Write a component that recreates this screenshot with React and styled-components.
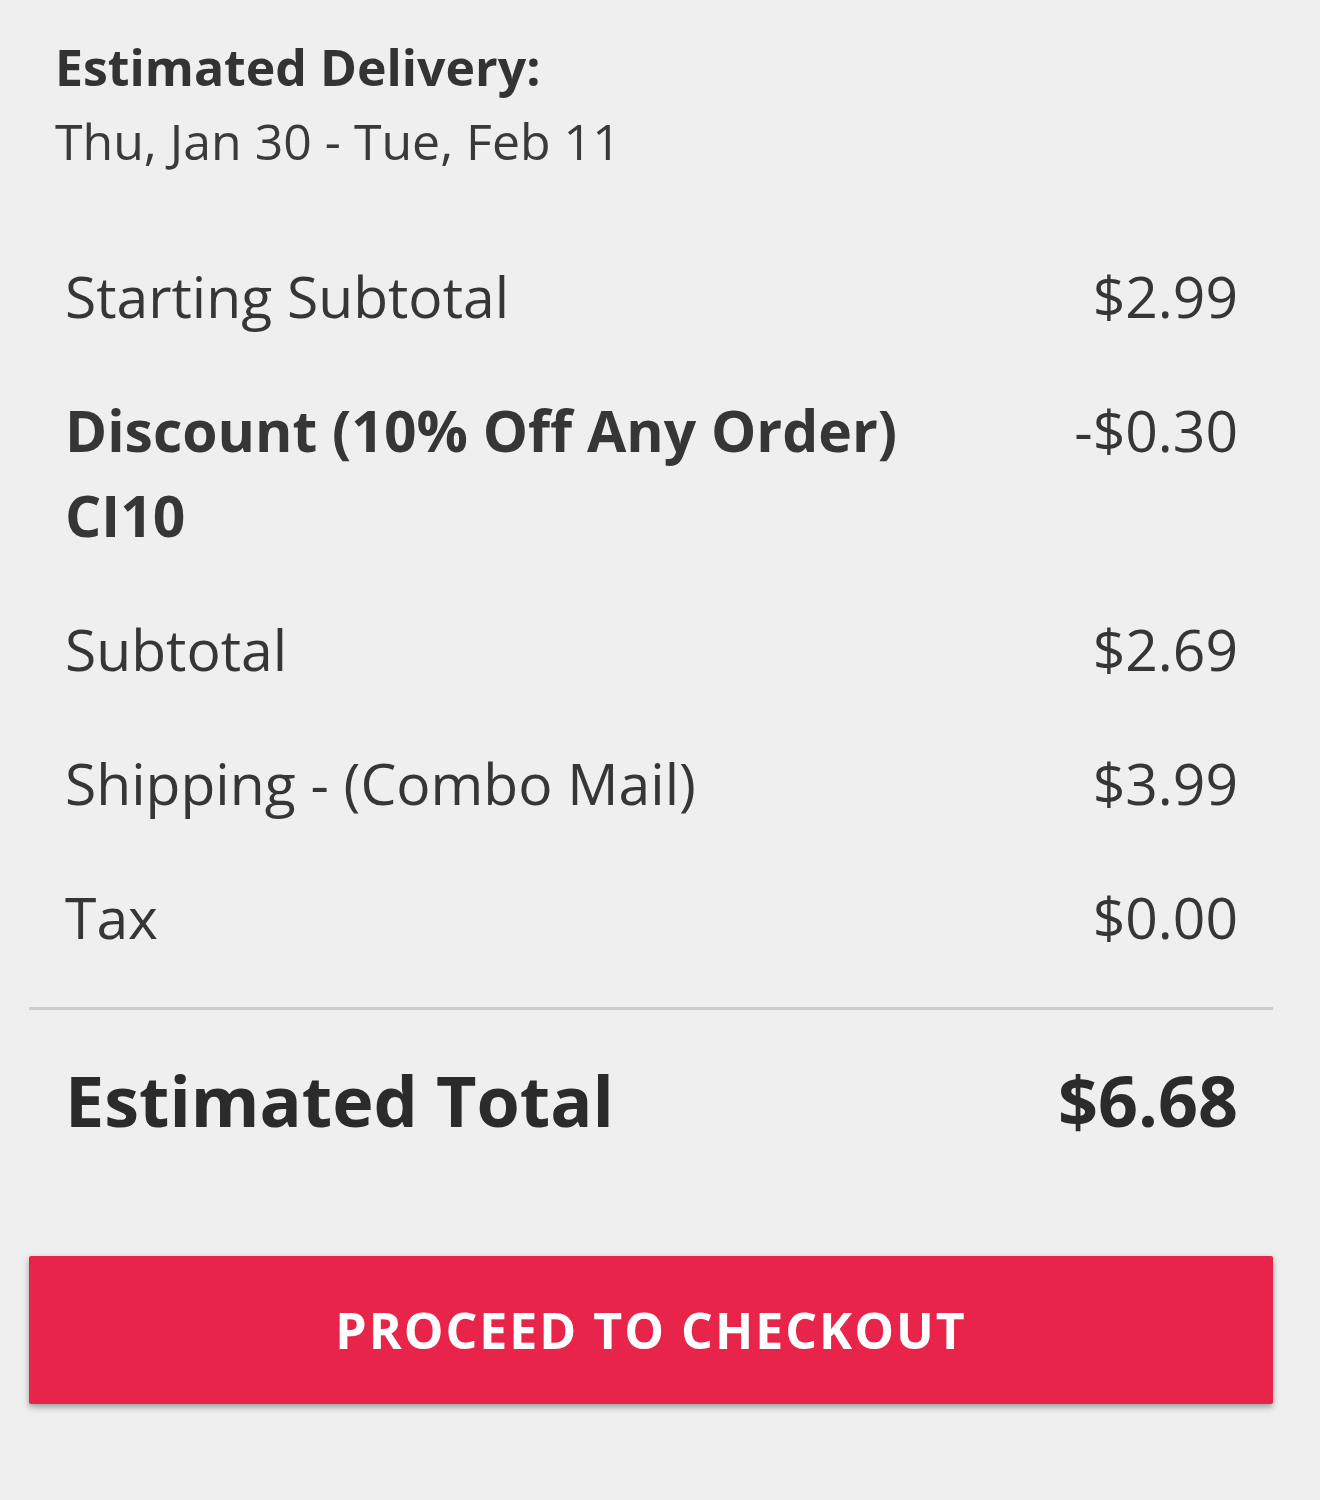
import React from 'react';
import styled, { createGlobalStyle } from 'styled-components';

const GlobalStyle = createGlobalStyle`
  html, body {
    margin: 0;
    padding: 0;
    background: #efefef;
  }
  body {
    font-family: "Open Sans", "Liberation Sans", sans-serif;
    color: #333;
  }
`;

const Page = styled.div`
  min-height: 1500px;
  padding: 0 47px 0 29px;
  box-sizing: border-box;
  background: #efefef;
`;

const Delivery = styled.div`
  padding: 30px 0 0 26px;
  font-size: 50px;
  line-height: 74px;
`;

const DeliveryTitle = styled.div`
  font-weight: 700;
  color: #333;
`;

const DeliveryDates = styled.div`
  font-weight: 400;
  color: #3a3a3a;
`;

const Lines = styled.div`
  margin-top: 51px;
  padding: 0 35px 0 36px;
`;

const Line = styled.div`
  display: flex;
  justify-content: space-between;
  align-items: flex-start;
  gap: 40px;
  padding: 24.5px 0;
  font-size: 57px;
  line-height: 85px;
  font-weight: ${p => (p.$bold ? 700 : 400)};
  color: #363636;
`;

const Label = styled.div`
  max-width: 880px;
`;

const Amount = styled.div`
  font-weight: 400;
  white-space: nowrap;
`;

const Divider = styled.hr`
  margin: 23px 0 0;
  border: 0;
  height: 3px;
  background: #cdcdcd;
`;

const Total = styled.div`
  display: flex;
  justify-content: space-between;
  padding: 40px 35px 0 36px;
  font-size: 70px;
  line-height: 100px;
  font-weight: 700;
  color: #2b2b2b;
`;

const CheckoutButton = styled.button`
  display: block;
  width: 100%;
  height: 148px;
  margin-top: 106px;
  border: 0;
  border-radius: 2px;
  background: #e9244a;
  color: #fff;
  font-family: "Open Sans", "Liberation Sans", sans-serif;
  font-size: 50px;
  font-weight: 700;
  letter-spacing: 2px;
  text-transform: uppercase;
  box-shadow: 0 3px 6px rgba(0, 0, 0, 0.35);
  cursor: pointer;
`;

const lines = [
  { label: 'Starting Subtotal', amount: '$2.99' },
  { label: 'Discount (10% Off Any Order) CI10', amount: '-$0.30', bold: true },
  { label: 'Subtotal', amount: '$2.69' },
  { label: 'Shipping - (Combo Mail)', amount: '$3.99' },
  { label: 'Tax', amount: '$0.00' },
];

export default function App() {
  return (
    <Page>
      <GlobalStyle />
      <Delivery>
        <DeliveryTitle>Estimated Delivery:</DeliveryTitle>
        <DeliveryDates>Thu, Jan 30 - Tue, Feb 11</DeliveryDates>
      </Delivery>
      <Lines>
        {lines.map(line => (
          <Line key={line.label} $bold={line.bold}>
            <Label>{line.label}</Label>
            <Amount>{line.amount}</Amount>
          </Line>
        ))}
      </Lines>
      <Divider />
      <Total>
        <span>Estimated Total</span>
        <span>$6.68</span>
      </Total>
      <CheckoutButton>Proceed to Checkout</CheckoutButton>
    </Page>
  );
}
